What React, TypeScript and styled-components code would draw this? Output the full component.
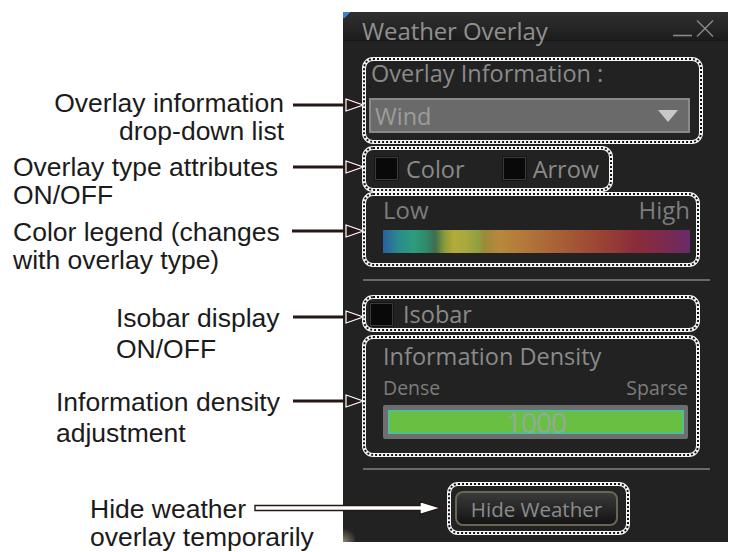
import styled, { createGlobalStyle } from 'styled-components'

const GlobalStyle = createGlobalStyle`
  html, body {
    margin: 0;
    padding: 0;
    background: #ffffff;
  }
  * {
    box-sizing: border-box;
  }
`

const Page = styled.div`
  display: flex;
  align-items: flex-start;
  width: 729px;
  height: 552px;
  overflow: hidden;
`

/* ---------- callouts on the left ---------- */

const Notes = styled.div`
  position: relative;
  z-index: 2;
  width: 343px;
  flex-shrink: 0;
  font-family: "Liberation Sans", Arial, sans-serif;
  font-size: 26.5px;
  color: #1b1b1b;
`

const Callout = styled.div<{ $mt: number; $lh: number }>`
  position: relative;
  margin-top: ${p => p.$mt}px;
  line-height: ${p => p.$lh}px;
`

const CalloutText = styled.div<{ $indent: number; $align: 'left' | 'right' }>`
  width: 284px;
  padding-left: ${p => p.$indent}px;
  text-align: ${p => p.$align};
  white-space: nowrap;
`

const ArrowSvg = styled.svg<{ $left: number; $top: number }>`
  position: absolute;
  left: ${p => p.$left}px;
  top: ${p => p.$top}px;
  overflow: visible;
`

type Note = {
  lines: string[]
  mt: number
  lh: number
  indent: number
  align: 'left' | 'right'
  from: number
  to: number
  arrowTop: number
  hollow?: boolean
}

const notes: Note[] = [
  { lines: ['Overlay information', 'drop-down list'], mt: 89, lh: 28, indent: 0, align: 'right', from: 293, to: 364, arrowTop: 9 },
  { lines: ['Overlay type attributes', 'ON/OFF'], mt: 8, lh: 28, indent: 13, align: 'left', from: 293, to: 364, arrowTop: 7 },
  { lines: ['Color legend (changes', 'with overlay type)'], mt: 9, lh: 28, indent: 13, align: 'left', from: 292, to: 364, arrowTop: 6 },
  { lines: ['Isobar display', 'ON/OFF'], mt: 29, lh: 31, indent: 116, align: 'left', from: 293, to: 364, arrowTop: 7 },
  { lines: ['Information density', 'adjustment'], mt: 22, lh: 31, indent: 56, align: 'left', from: 293, to: 364, arrowTop: 7 },
  { lines: ['Hide weather', 'overlay temporarily'], mt: 46, lh: 28, indent: 90, align: 'left', from: 255, to: 442, arrowTop: 5, hollow: true },
]

function Arrow({ from, to, top, hollow }: { from: number; to: number; top: number; hollow?: boolean }) {
  const w = to - from
  if (hollow) {
    return (
      <ArrowSvg $left={from} $top={top} width={w} height={16} viewBox={`0 0 ${w} 16`}>
        <path
          d={`M0,5.5 H${w - 22} V1.5 L${w - 1},8 L${w - 22},14.5 V10.5 H0 Z`}
          fill="#ffffff"
          stroke="#231815"
          strokeWidth={1.4}
          strokeLinejoin="miter"
        />
      </ArrowSvg>
    )
  }
  return (
    <ArrowSvg $left={from} $top={top} width={w} height={14} viewBox={`0 0 ${w} 14`}>
      <line x1={0} y1={7} x2={w - 14} y2={7} stroke="#231815" strokeWidth={3} />
      <polygon points={`${w - 18},1 ${w - 0.8},7 ${w - 18},13`} fill="#231815" stroke="#ffffff" strokeWidth={1.2} />
    </ArrowSvg>
  )
}

/* ---------- the weather overlay panel ---------- */

const Panel = styled.section`
  position: relative;
  width: 385px;
  height: 530px;
  margin-top: 12px;
  background: #222222;
  font-family: "Open Sans", "Noto Sans", sans-serif;
  color: #888888;
  display: flex;
  flex-direction: column;

  &::before {
    content: '';
    position: absolute;
    top: 0;
    left: 0;
    width: 9px;
    height: 6px;
    background: linear-gradient(135deg, #3f7fd4 50%, transparent 50%);
  }

  &::after {
    content: '';
    position: absolute;
    left: 0;
    bottom: 0;
    width: 12px;
    height: 14px;
    background: radial-gradient(circle at 0 100%, #8a8670 0, #5a5748 35%, transparent 75%);
  }
`

const TitleBar = styled.header`
  display: flex;
  align-items: flex-start;
  justify-content: space-between;
  height: 29px;
  padding: 7px 11px 0 19px;
  background: linear-gradient(#303030, #1c1c1c);
  border-bottom: 1px solid #171717;
`

const Title = styled.h1`
  margin: 0;
  font-size: 24px;
  font-weight: 400;
  line-height: 24px;
  letter-spacing: -0.1px;
  color: #909090;
  white-space: nowrap;
`

const WindowControls = styled.svg`
  margin-top: 1px;
  flex-shrink: 0;
`

const Body = styled.div`
  display: flex;
  flex-direction: column;
  padding: 16px 0 0 19px;
`

const Marked = styled.div<{ $w: number; $h: number; $mt?: number; $ml?: number }>`
  position: relative;
  width: ${p => p.$w}px;
  height: ${p => p.$h}px;
  margin-top: ${p => p.$mt ?? 0}px;
  margin-left: ${p => p.$ml ?? 0}px;
  border: 4px solid #f3f3f3;
  border-radius: 11px;

  &::after {
    content: '';
    position: absolute;
    inset: -3px;
    border: 2px dotted #141414;
    border-radius: 10px;
    pointer-events: none;
  }
`

const InfoGroup = styled(Marked)`
  padding: 0 0 0 5px;
`

const TypeGroup = styled(Marked)`
  display: flex;
  align-items: center;
  padding: 0 0 1px 9px;
`

const LegendGroup = styled(Marked)`
  padding: 2px 6px 0 17px;
`

const IsobarGroup = styled(Marked)`
  display: flex;
  align-items: center;
  padding: 1px 0 0 4px;
`

const DensityGroup = styled(Marked)`
  padding: 5px 8px 0 17px;
`

const HideGroup = styled(Marked)`
  display: flex;
  align-items: center;
  justify-content: center;
`

const FieldLabel = styled.div`
  font-size: 23.5px;
  line-height: 24px;
  color: #8a8a8a;
  white-space: nowrap;
`

const Dropdown = styled.div`
  display: flex;
  align-items: center;
  justify-content: space-between;
  width: 321px;
  height: 35px;
  margin: 13px 0 0 -2px;
  padding: 0 10px 0 4px;
  background: #6a6a6a;
  border: 2px solid #898989;
  font-size: 23.5px;
  color: #9d9d9d;
`

const Check = styled.span<{ $ml?: number }>`
  display: inline-block;
  flex-shrink: 0;
  width: 23px;
  height: 23px;
  margin-left: ${p => p.$ml ?? 0}px;
  background: #090909;
  border: 1px solid #3b3b3b;
  box-shadow: 0 0 0 1px #141414;
`

const CheckText = styled.span<{ $ml: number }>`
  margin-left: ${p => p.$ml}px;
  font-size: 23.5px;
  line-height: 24px;
  color: #8a8a8a;
`

const RangeLabels = styled.div<{ $size: number; $mt?: number }>`
  display: flex;
  justify-content: space-between;
  margin-top: ${p => p.$mt ?? 0}px;
  font-size: ${p => p.$size}px;
  line-height: ${p => Math.round(p.$size)}px;
  color: #7c7c7c;
`

const ColorBar = styled.div`
  width: 307px;
  height: 23px;
  margin-top: 8px;
  background: linear-gradient(
    to right,
    #2a5e9c 0%,
    #2b8a8e 5%,
    #2c9d7c 10%,
    #2f8a6a 14%,
    #3e6e4e 17%,
    #8a9a3c 20%,
    #b4aa3a 23%,
    #a8a93e 27%,
    #8fa040 31%,
    #9a8a3a 33%,
    #b8883c 38%,
    #b47a3a 45%,
    #a96336 56%,
    #9b4634 70%,
    #8c2c3a 82%,
    #7d2a4c 91%,
    #6a2a68 100%
  );
`

const Divider = styled.hr<{ $mt: number }>`
  width: 347px;
  height: 2px;
  margin: ${p => p.$mt}px 0 0 1px;
  border: none;
  background: #6a6a6a;
`

const Slider = styled.div`
  width: 305px;
  height: 34px;
  margin-top: 7px;
  padding: 5px 4px 5px 5px;
  background: #6e6e6e;
  border-radius: 2px;
`

const SliderFill = styled.div`
  display: flex;
  align-items: center;
  justify-content: center;
  height: 100%;
  background: #68bf42;
  border: 1.5px solid #36c2d6;
  font-size: 28px;
  letter-spacing: -1px;
  line-height: 22px;
  color: #93aa9c;
`

const HideButton = styled.button`
  display: flex;
  align-items: center;
  justify-content: center;
  width: 163px;
  height: 35px;
  margin-left: -4px;
  padding: 0;
  border: 2px solid #6a6550;
  border-radius: 8px;
  background: linear-gradient(#3a3a3a, #141414);
  font-family: "Open Sans", "Noto Sans", sans-serif;
  font-size: 20.5px;
  color: #8c8c8c;
`

function WeatherPanel() {
  return (
    <Panel>
      <TitleBar>
        <Title>Weather Overlay</Title>
        <WindowControls width={44} height={20} viewBox="0 0 44 20">
          <line x1={0} y1={15.5} x2={19} y2={15.5} stroke="#8a8a8a" strokeWidth={1.6} />
          <line x1={24} y1={0.5} x2={40} y2={16.5} stroke="#8a8a8a" strokeWidth={1.4} />
          <line x1={40} y1={0.5} x2={24} y2={16.5} stroke="#8a8a8a" strokeWidth={1.4} />
        </WindowControls>
      </TitleBar>
      <Body>
        <InfoGroup $w={341} $h={87}>
          <FieldLabel>Overlay Information :</FieldLabel>
          <Dropdown>
            <span>Wind</span>
            <svg width={20} height={12} viewBox="0 0 20 12">
              <polygon points="0,0 20,0 10,12" fill="#c9c9c9" />
            </svg>
          </Dropdown>
        </InfoGroup>

        <TypeGroup $w={251} $h={46} $mt={2}>
          <Check />
          <CheckText $ml={8}>Color</CheckText>
          <Check $ml={38} />
          <CheckText $ml={7}>Arrow</CheckText>
        </TypeGroup>

        <LegendGroup $w={338} $h={75}>
          <RangeLabels $size={24}>
            <span>Low</span>
            <span>High</span>
          </RangeLabels>
          <ColorBar />
        </LegendGroup>

        <Divider $mt={12} />

        <IsobarGroup $w={338} $h={37} $mt={14}>
          <Check />
          <CheckText $ml={10}>Isobar</CheckText>
        </IsobarGroup>

        <DensityGroup $w={338} $h={122} $mt={3}>
          <FieldLabel>Information Density</FieldLabel>
          <RangeLabels $size={19.5} $mt={10}>
            <span>Dense</span>
            <span>Sparse</span>
          </RangeLabels>
          <Slider>
            <SliderFill>1000</SliderFill>
          </Slider>
        </DensityGroup>

        <Divider $mt={11} />

        <HideGroup $w={183} $h={53} $mt={12} $ml={85}>
          <HideButton>Hide Weather</HideButton>
        </HideGroup>
      </Body>
    </Panel>
  )
}

export default function App() {
  return (
    <Page>
      <GlobalStyle />
      <Notes>
        {notes.map(n => (
          <Callout key={n.lines[0]} $mt={n.mt} $lh={n.lh}>
            <CalloutText $indent={n.indent} $align={n.align}>
              {n.lines.map(l => (
                <div key={l}>{l}</div>
              ))}
            </CalloutText>
            <Arrow from={n.from} to={n.to} top={n.arrowTop} hollow={n.hollow} />
          </Callout>
        ))}
      </Notes>
      <WeatherPanel />
    </Page>
  )
}
